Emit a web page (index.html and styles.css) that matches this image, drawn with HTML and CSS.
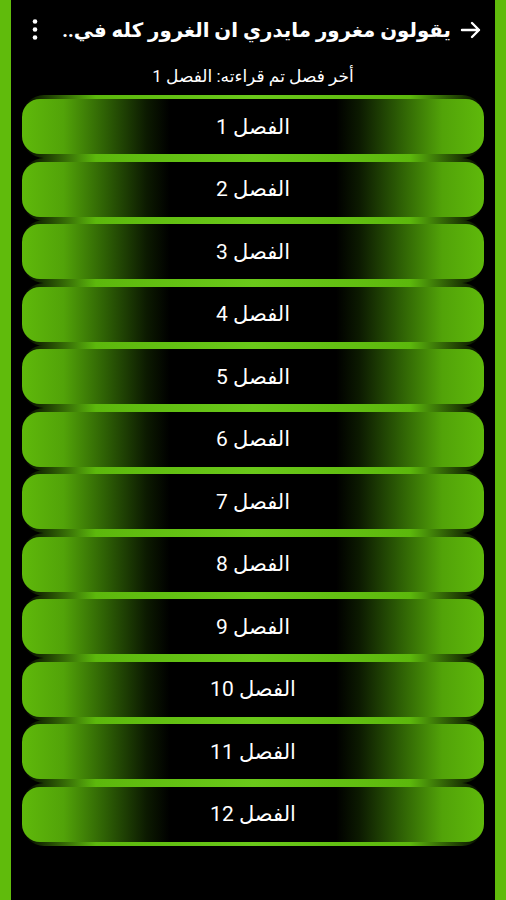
FILE: index.html
```html
<!DOCTYPE html>
<html lang="ar" dir="rtl">

<head>
  <meta charset="UTF-8">
  <meta name="viewport" content="width=device-width, initial-scale=1.0">
  <title>الفصول</title>
  <link rel="stylesheet" href="styles.css">
</head>

<body>
  <div class="frame">
    <!-- toolbar -->
    <div class="toolbar">
      <button class="icon-btn back">
        <svg width="24" height="24" viewBox="0 0 24 24">
          <path d="M3 12h17M13 5l7 7-7 7" fill="none" stroke="#fff" stroke-width="2.4" stroke-linecap="round" stroke-linejoin="round"/>
        </svg>
      </button>
      <h1 class="title">يقولون مغرور مايدري ان الغرور كله في..</h1>
      <button class="icon-btn menu">
        <svg width="24" height="24" viewBox="0 0 24 24">
          <circle cx="12" cy="3.5" r="2.3" fill="#fff"/>
          <circle cx="12" cy="11.5" r="2.3" fill="#fff"/>
          <circle cx="12" cy="19.5" r="2.3" fill="#fff"/>
        </svg>
      </button>
    </div>

    <p class="last-read">أخر فصل تم قراءته: الفصل 1</p>

    <div class="chapters" id="chapters"></div>
  </div>

  <script>
    const list = document.getElementById('chapters');
    for (let i = 1; i <= 12; i++) {
      const item = document.createElement('button');
      item.className = 'chapter';
      item.innerHTML = '<span>الفصل ' + i + '</span>';
      list.appendChild(item);
    }
  </script>
</body>

</html>
```

FILE: styles.css
```css
body {
  margin: 0;
  background-color: #000;
  font-family: Roboto, "DejaVu Sans", sans-serif;
  color: #fff;
}

.frame {
  min-height: 100vh;
  border-left: 11px solid #60bb0c;
  border-right: 11px solid #60bb0c;
  box-sizing: border-box;
}

.toolbar {
  display: flex;
  align-items: center;
  height: 60px;
  padding: 0 12px;
  gap: 8px;
}

.icon-btn {
  display: flex;
  background: none;
  border: none;
  padding: 0;
  width: 24px;
  height: 24px;
  flex-shrink: 0;
}

.title {
  flex: 1;
  min-width: 0;
  margin: 0;
  font-size: 19.8px;
  font-weight: bold;
  white-space: nowrap;
}

.last-read {
  margin: 4px 0 0;
  text-align: center;
  font-size: 17px;
  line-height: 24px;
}

.chapters {
  display: flex;
  flex-direction: column;
  gap: 7.5px;
  padding: 11px 11px 0;
}

.chapter {
  position: relative;
  height: 55px;
  border: none;
  padding: 0;
  border-radius: 18px;
  background: linear-gradient(to right,
      #5fb90b 0%, #52a309 9%, #2e6005 18%, #0c1a01 27%, #000 32%,
      #000 68%, #0c1a01 73%, #2e6005 82%, #52a309 91%, #5fb90b 100%);
  font-family: Roboto, "DejaVu Sans", sans-serif;
  font-size: 21px;
  color: #fff;
}

/* green glow strip behind each pill */
.chapter::before {
  content: "";
  position: absolute;
  top: -4px;
  bottom: -4px;
  left: 0;
  right: 0;
  z-index: -1;
  border-radius: 22px;
  background: linear-gradient(to right,
      #000 0%, #1d3a03 5%, #5cb80c 16%, #6ac81a 50%, #5cb80c 84%, #1d3a03 95%, #000 100%);
}

.chapter span {
  position: relative;
}
```
